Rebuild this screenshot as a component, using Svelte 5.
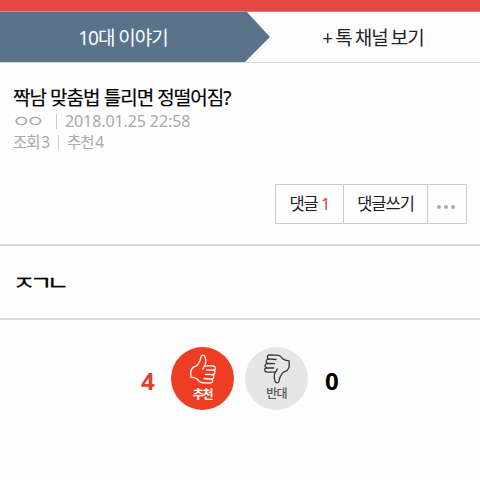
<script>
  // --- DATA ---
  const post = {
    channel: '10대 이야기',
    title: '짝남 맞춤법 틀리면 정떨어짐?',
    author: 'ㅇㅇ',
    date: '2018.01.25 22:58',
    views: 3,
    likes: 4,
    dislikes: 0,
    comments: 1,
    body: 'ㅈㄱㄴ'
  };
</script>

{#snippet thumb()}
  <svg viewBox="0 0 26 30">
    <path d="M14.500 12 C16 9.500 16 5.500 14.800 2.500 C14.200 0.600 11.300 0.700 11 3 C10.500 7.300 9 9 7.300 11.200 C6.200 12.700 4 12.600 3 13.500 C1 15.300 0.700 17 0.700 19 L1 23.200 C4 23.500 5.500 23.700 7 25 C9.500 28 10.500 28.800 14 28.900 L20.500 29 C23.300 29 23.200 25.500 21.500 25.200" />
    <path d="M12.800 15 C13.500 12 15 11.800 18 11.800 L23 11.800 C25.900 11.900 25.900 15.800 23.800 16.200 L16.500 16" />
    <path d="M23.800 16.200 C25.600 16.800 25.200 20.500 22.800 20.700 L15.500 20.300" />
    <path d="M22.800 20.700 C24.500 21.500 24 25 21.500 25.200 L14 24.500" />
  </svg>
{/snippet}

<div class="page">
  <div class="top-bar"></div>

  <nav class="tabs">
    <a class="tab current" href="#channel"><span>{post.channel}</span></a>
    <a class="tab more" href="#all"><span>+ 톡 채널 보기</span></a>
  </nav>

  <header class="post-head">
    <h1>{post.title}</h1>
    <div class="meta">
      <span class="author"><b>{post.author}</b></span>
      <span class="date">{post.date}</span>
    </div>
    <div class="meta counts">
      <span class="views">조회 {post.views}</span>
      <span class="recs">추천 {post.likes}</span>
    </div>
    <div class="actions">
      <button class="act list">댓글 <em>{post.comments}</em></button>
      <button class="act write">댓글쓰기</button>
      <button class="act dots" aria-label="더보기"><i></i><i></i><i></i></button>
    </div>
  </header>

  <section class="body"><span>{post.body}</span></section>

  <section class="votes">
    <span class="num up">{post.likes}</span>
    <button class="vote up">
      {@render thumb()}
      <span>추천</span>
    </button>
    <button class="vote down">
      {@render thumb()}
      <span>반대</span>
    </button>
    <span class="num down">{post.dislikes}</span>
  </section>
</div>

<style>
  :global(body) { margin: 0; background: #fefefe; }

  .page {
    width: 480px; height: 480px; overflow: hidden;
    background: #fefefe; color: #111;
    font-family: 'Noto Sans', 'Noto Sans CJK KR', sans-serif;
  }
  .page * { box-sizing: border-box; }
  button { margin: 0; padding: 0; border: 0; background: none; font: inherit; color: inherit; }

  /* --- TABS --- */
  .top-bar { height: 12px; background: #e54643; border-bottom: 1px solid #c9898b; }
  .tabs { display: flex; height: 51px; border-bottom: 1px solid #d3d9dd; }
  .tab {
    display: flex; align-items: center; justify-content: center;
    font-size: 19px; letter-spacing: -1px; text-decoration: none; white-space: pre;
  }
  .current {
    width: 270px; padding-right: 24px; color: #fff; background: #5a738d;
    clip-path: polygon(0 0, 247px 0, 270px 25px, 245px 100%, 0 100%);
  }
  .more { width: 210px; color: #222; padding-right: 4px; word-spacing: -0.8px; }

  /* --- POST HEAD --- */
  .post-head { height: 183px; padding: 22px 13px 0 13px; border-bottom: 2px solid #dcdcdc; }
  h1 { margin: 0; font-size: 19px; line-height: 27px; height: 26px; font-weight: 400; letter-spacing: -0.95px; white-space: nowrap; color: #000; -webkit-text-stroke: 0.2px #000; }
  .meta { display: flex; height: 21px; line-height: 21px; font-size: 16px; letter-spacing: -0.1px; color: #aaa; white-space: nowrap; }
  .author { width: 43px; }
  .author b { display: inline-block; font-weight: 400; letter-spacing: -4px; transform: scaleX(1.3) translateX(-1px); transform-origin: 0 50%; }
  .date, .recs { display: flex; align-items: center; }
  .date::before, .recs::before { content: ''; width: 1px; height: 15px; margin-right: 8px; background: #ccc; }
  .counts { font-size: 15.5px; letter-spacing: -0.9px; word-spacing: -1.5px; }
  .views { width: 45px; }

  .actions { display: flex; width: 192px; height: 40px; margin: 31px 0 0 auto; border: 1px solid #ccc; }
  .act { display: flex; align-items: center; justify-content: center; font-size: 16.5px; letter-spacing: -1px; color: #222; white-space: pre; padding-bottom: 2px; }
  .act + .act { border-left: 1px solid #ccc; }
  .act em { font-style: normal; color: #d9403f; }
  .list { width: 67px; }
  .write { width: 84px; }
  .dots { flex: 1; gap: 3px; padding: 5px 2px 0 0; }
  .dots i { width: 4px; height: 4px; border-radius: 50%; background: #aaa; }

  /* --- BODY --- */
  .body { height: 74px; padding-left: 14px; line-height: 73px; font-size: 19.5px; font-weight: 400; border-bottom: 2px solid #dcdcdc; color: #000; -webkit-text-stroke: 0.3px #000; }
  .body span { display: inline-block; letter-spacing: -4.3px; transform: scaleX(1.25) translateX(-1px); transform-origin: 0 50%; }

  /* --- VOTES --- */
  .votes { display: flex; align-items: center; padding: 27px 0 0 141px; }
  .num { font: bold 24px 'Noto Sans', sans-serif; padding-top: 3px; }
  .num.up { width: 30px; color: #e0412f; }
  .num.down { color: #000; margin-left: 17px; }
  .vote { display: flex; flex-direction: column; align-items: center; width: 63px; height: 63px; border-radius: 50%; padding-top: 7px; }
  .vote svg { width: 26px; height: 30px; fill: none; stroke: currentColor; stroke-width: 1.3; stroke-linejoin: round; stroke-linecap: round; }
  .vote span { margin-top: 2px; font-size: 12px; line-height: 16px; font-weight: 700; letter-spacing: -1.2px; }
  .vote.up { background: #ed3e23; color: #fff; }
  .vote.up span { margin-top: 3px; }
  .vote.down { margin-left: 11px; background: #e6e6e6; color: #333; }
  .vote.down svg { transform: rotate(180deg); }
  .vote.down span { color: #555; font-weight: 500; letter-spacing: -0.7px; }
</style>
